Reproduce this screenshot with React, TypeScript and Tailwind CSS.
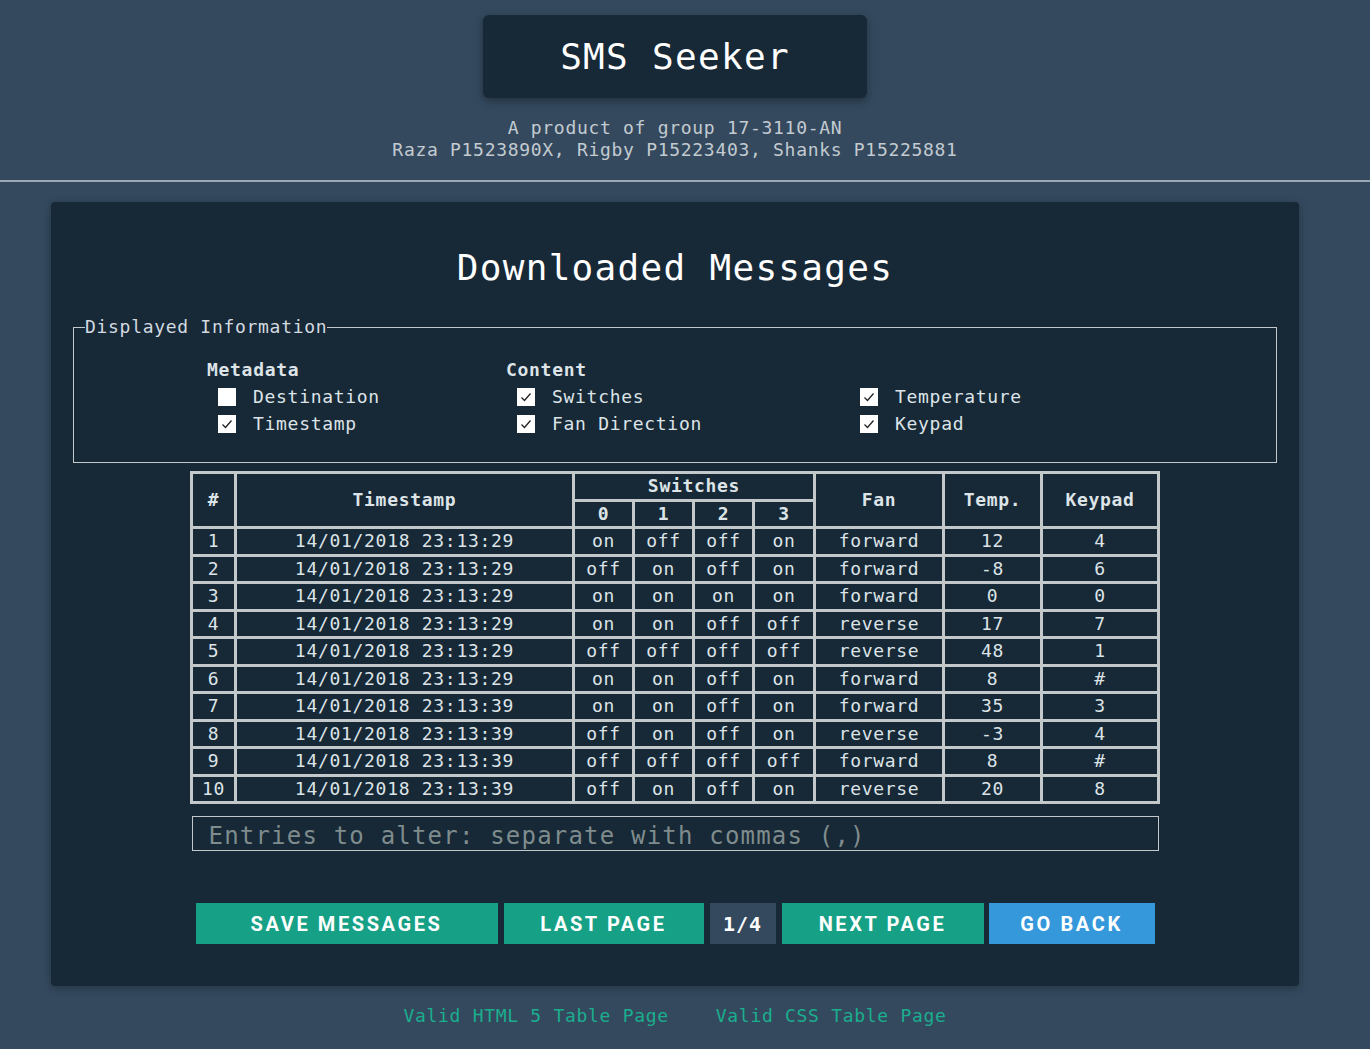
const mono = "font-['DejaVu_Sans_Mono','Liberation_Mono',monospace]";

type Row = [number, string, string, string, string, string, string, string, string];

const rows: Row[] = [
  [1, "14/01/2018 23:13:29", "on", "off", "off", "on", "forward", "12", "4"],
  [2, "14/01/2018 23:13:29", "off", "on", "off", "on", "forward", "-8", "6"],
  [3, "14/01/2018 23:13:29", "on", "on", "on", "on", "forward", "0", "0"],
  [4, "14/01/2018 23:13:29", "on", "on", "off", "off", "reverse", "17", "7"],
  [5, "14/01/2018 23:13:29", "off", "off", "off", "off", "reverse", "48", "1"],
  [6, "14/01/2018 23:13:29", "on", "on", "off", "on", "forward", "8", "#"],
  [7, "14/01/2018 23:13:39", "on", "on", "off", "on", "forward", "35", "3"],
  [8, "14/01/2018 23:13:39", "off", "on", "off", "on", "reverse", "-3", "4"],
  [9, "14/01/2018 23:13:39", "off", "off", "off", "off", "forward", "8", "#"],
  [10, "14/01/2018 23:13:39", "off", "on", "off", "on", "reverse", "20", "8"],
];

function Check({ on, label }: { on: boolean; label: string }) {
  return (
    <div className="flex items-center h-[27px]">
      <span className="ml-[11px] w-[18px] h-[18px] bg-white flex items-center justify-center">
        {on && (
          <svg width="14" height="14" viewBox="0 0 14 14">
            <path d="M2.5 7.5 L5.5 10.5 L11.5 3.5" fill="none" stroke="#222" strokeWidth="1.3" />
          </svg>
        )}
      </span>
      <span className="ml-[17px]">{label}</span>
    </div>
  );
}

const td = "border-[3px] border-[#c3c8cb] p-0 leading-[24.5px] text-center";
const th = "border-[3px] border-[#c3c8cb] p-0 leading-[24.5px] text-center font-bold";

export default function App() {
  return (
    <div className={`min-h-[1049px] bg-[#34495e] text-[#dde4e8] ${mono} text-[18px] tracking-[0.7px]`}>
      {/* header */}
      <div className="border-b-2 border-[#9aa7b4]">
        <div className="w-[1350px] flex flex-col items-center pt-[15px] pb-[19px]">
          <div className="w-[384px] h-[83px] rounded-md bg-[#172836] shadow-[0_3px_8px_rgba(0,0,0,0.35)] flex items-center justify-center">
            <h1 className="text-[36px] tracking-[1.3px] text-white leading-none">SMS Seeker</h1>
          </div>
          <div className="mt-[19px] text-center text-[#c3cbd1] leading-[22px]">
            <p>A product of group 17-3110-AN</p>
            <p>Raza P1523890X, Rigby P15223403, Shanks P15225881</p>
          </div>
        </div>
      </div>

      <div className="w-[1350px] pt-[20px]">
        {/* panel */}
        <div className="mx-auto w-[1248px] bg-[#172836] rounded-sm shadow-[0_2px_8px_rgba(0,0,0,0.3)] px-[22px] pt-[44px] pb-[42px]">
          <h2 className="text-center text-[36px] tracking-[1.3px] text-white leading-[44px]">Downloaded Messages</h2>

          <fieldset className="mt-[26px] border border-[#c3c8cb] pl-[11px] pb-[25px]">
            <legend className="leading-[22px] text-[#d3dae0]">Displayed Information</legend>
            <div className="flex ml-[122px] mt-[21px]">
              <div className="w-[299px]">
                <div className="font-bold leading-[22px]">Metadata</div>
                <div className="mt-[2px]">
                  <Check on={false} label="Destination" />
                  <Check on={true} label="Timestamp" />
                </div>
              </div>
              <div className="w-[343px]">
                <div className="font-bold leading-[22px]">Content</div>
                <div className="mt-[2px]">
                  <Check on={true} label="Switches" />
                  <Check on={true} label="Fan Direction" />
                </div>
              </div>
              <div>
                <div className="leading-[22px]">&nbsp;</div>
                <div className="mt-[2px]">
                  <Check on={true} label="Temperature" />
                  <Check on={true} label="Keypad" />
                </div>
              </div>
            </div>
          </fieldset>

          <table className="mt-[8px] mx-auto w-[967px] table-fixed border-collapse">
            <colgroup>
              <col className="w-[44px]" />
              <col className="w-[338px]" />
              <col className="w-[60px]" />
              <col className="w-[60px]" />
              <col className="w-[60px]" />
              <col className="w-[61px]" />
              <col className="w-[129px]" />
              <col className="w-[98px]" />
              <col className="w-[117px]" />
            </colgroup>
            <thead>
              <tr>
                <th rowSpan={2} className={th}>#</th>
                <th rowSpan={2} className={th}>Timestamp</th>
                <th colSpan={4} className={th}>Switches</th>
                <th rowSpan={2} className={th}>Fan</th>
                <th rowSpan={2} className={th}>Temp.</th>
                <th rowSpan={2} className={th}>Keypad</th>
              </tr>
              <tr>
                <th className={th}>0</th>
                <th className={th}>1</th>
                <th className={th}>2</th>
                <th className={th}>3</th>
              </tr>
            </thead>
            <tbody>
              {rows.map((r) => (
                <tr key={r[0]}>
                  {r.map((c, i) => (
                    <td key={i} className={td}>
                      {c}
                    </td>
                  ))}
                </tr>
              ))}
            </tbody>
          </table>

          <div className="mt-[12px] mx-auto w-[967px] h-[35px] border border-[#c3c8cb] flex items-center px-[16px]">
            <input
              className={`w-full bg-transparent outline-none text-[24px] tracking-[1.2px] mt-[4px] placeholder:text-[#7f8c8d] ${mono}`}
              placeholder="Entries to alter: separate with commas (,)"
            />
          </div>

          <div className="mt-[52px] flex justify-center gap-[6px] font-['Roboto',sans-serif] font-bold text-[20px] tracking-[2.6px] text-white">
            <button className="w-[302px] h-[41px] bg-[#16a085]">SAVE MESSAGES</button>
            <button className="w-[200px] h-[41px] bg-[#16a085]">LAST PAGE</button>
            <div className={`w-[66px] h-[41px] bg-[#34495e] flex items-center justify-center ${mono} text-[20px] tracking-[1px]`}>1/4</div>
            <button className="w-[202px] h-[41px] bg-[#16a085]">NEXT PAGE</button>
            <button className="w-[166px] h-[41px] bg-[#3498db] ml-[-1px]">GO BACK</button>
          </div>
        </div>

        <div className="mt-[19px] flex justify-center gap-[47px] text-[#1aae8e] leading-[22px]">
          <a>Valid HTML 5 Table Page</a>
          <a>Valid CSS Table Page</a>
        </div>
      </div>
    </div>
  );
}
